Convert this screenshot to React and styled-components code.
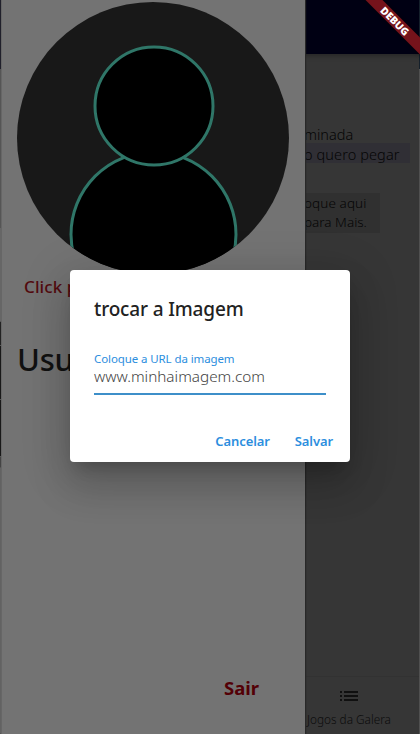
import React from 'react';
import styled, { createGlobalStyle } from 'styled-components';

const GlobalStyle = createGlobalStyle`
  * { box-sizing: border-box; }
  body { margin: 0; overflow: hidden; font-family: 'Noto Sans', 'Open Sans', sans-serif; }
`;

const Screen = styled.div`
  position: relative;
  width: 420px;
  height: 734px;
  overflow: hidden;
  background: #363636;
`;

const Label = styled.span`
  display: block;
  white-space: nowrap;
  font-size: ${(p) => p.$size}px;
  line-height: ${(p) => p.$line || 20}px;
  font-weight: ${(p) => p.$weight || 400};
  letter-spacing: ${(p) => p.$spacing || 0}px;
  color: ${(p) => p.$color};
`;

const Page = styled.div`
  height: 100%;
  display: flex;
  flex-direction: column;
`;

const AppBar = styled.header`
  flex: 0 0 54px;
  background: #000013;
  box-shadow: 0 2px 5px rgba(0, 0, 0, 0.3);
`;

const Content = styled.main`
  flex: 1;
  display: flex;
  flex-direction: column;
  align-items: flex-start;
  padding: 70px 0 0 304px;
`;

const Note = styled.div`
  display: flex;
  flex-direction: column;
  align-items: flex-start;
  width: ${(p) => p.$width}px;
  height: ${(p) => p.$height}px;
  margin-top: ${(p) => p.$gap}px;
  background: ${(p) => p.$fill};
`;

const BottomBar = styled.nav`
  flex: 0 0 58px;
  display: flex;
  flex-direction: column;
  align-items: center;
  padding: 7px 0 0 278px;
  border-top: 1px solid #323232;
`;

const Ribbon = styled.div`
  position: absolute;
  z-index: 5;
  top: 15px;
  right: -27px;
  width: 104px;
  height: 12px;
  display: flex;
  align-items: center;
  justify-content: center;
  transform: rotate(45deg);
  background: #75131b;
  box-shadow: 0 0 4px rgba(0, 0, 0, 0.6);
`;

const Drawer = styled.aside`
  position: absolute;
  top: 0;
  left: 0;
  width: 305px;
  height: 100%;
  display: flex;
  flex-direction: column;
  align-items: flex-start;
  padding: 2px 0 0 17px;
  background: #737373;
  box-shadow: 1px 0 1px #282828;
`;

const Avatar = styled.svg`
  flex: none;
  display: block;
`;

const PhotoHint = styled.div`
  width: 60px;
  overflow: hidden;
  margin: 2px 0 0 7px;
`;

const UserName = styled.div`
  width: 60px;
  overflow: hidden;
  margin-top: 43px;
`;

const SignOut = styled.div`
  margin: auto 0 33px 207px;
`;

const WindowEdge = styled.div`
  position: absolute;
  top: 0;
  ${(p) => p.$side}: 0;
  width: ${(p) => p.$width}px;
  height: 100%;
  display: flex;
  flex-direction: column;
  border-right: ${(p) => (p.$side === 'left' ? '1px solid #666' : 'none')};
`;

const EdgePart = styled.div`
  height: ${(p) => p.$height}px;
  border-bottom: 1px solid #555;
  background: ${(p) => p.$fill};
`;

const Dialog = styled.section`
  position: absolute;
  top: 270px;
  left: 70px;
  width: 280px;
  height: 192px;
  display: flex;
  flex-direction: column;
  padding: 25px 17px 8px 24px;
  border-radius: 4px;
  background: #fff;
  box-shadow: 0 11px 15px -7px rgba(0, 0, 0, 0.2), 0 24px 38px 3px rgba(0, 0, 0, 0.14), 0 9px 46px 8px rgba(0, 0, 0, 0.12);
`;

const Field = styled.div`
  width: 232px;
  margin-top: 27px;
  height: 45px;
  border-bottom: 2px solid #3d8fc9;
`;

const Actions = styled.div`
  display: flex;
  justify-content: flex-end;
  gap: 25px;
  margin-top: 36px;
`;

const edges = [
  [70, '#20202b'],
  [60, '#555'],
  [98, '#555'],
  [94, '#666'],
  [24, '#222'],
  [54, '#181818'],
  [57, '#181818'],
  [11, '#444'],
  [266, '#626262'],
];

const ListIcon = () => (
  <svg width="24" height="24" viewBox="0 0 24 24" fill="#101010">
    <path d="M3 13h2v-2H3v2zm0 4h2v-2H3v2zm0-8h2V7H3v2zm4 4h14v-2H7v2zm0 4h14v-2H7v2zM7 7v2h14V7H7z" />
  </svg>
);

const UserPicture = () => (
  <Avatar width="272" height="272" viewBox="0 0 272 272">
    <defs>
      <clipPath id="avatarClip">
        <circle cx="136" cy="136" r="136" />
      </clipPath>
    </defs>
    <g clipPath="url(#avatarClip)" stroke="#2f7668" strokeWidth="3">
      <circle cx="136" cy="136" r="137" fill="#181818" stroke="none" />
      <circle cx="136.5" cy="232.5" r="82.5" fill="#000" />
      <circle cx="137" cy="104" r="59" fill="#000" />
    </g>
  </Avatar>
);

export default function App() {
  return (
    <>
      <GlobalStyle />
      <Screen>
        <Page>
          <AppBar />
          <Content>
            <Label $size={14.5} $weight={300} $color="#050505">minada</Label>
            <Note $width={106} $height={20} $gap={-1} $fill="#302f35">
              <Label $size={14.5} $weight={300} $spacing={0.1} $line={22} $color="#050505">o quero pegar</Label>
            </Note>
            <Note $width={76} $height={40} $gap={30} $fill="#303030">
              <Label $size={13.5} $weight={300} $spacing={0.1} $line={20} $color="#050505">oque aqui</Label>
              <Label $size={13.5} $weight={300} $line={19} $color="#050505">para Mais.</Label>
            </Note>
          </Content>
          <BottomBar>
            <ListIcon />
            <Label $size={11.8} $weight={300} $line={22} $color="#0c0c0c">Jogos da Galera</Label>
          </BottomBar>
        </Page>
        <Drawer>
          <UserPicture />
          <PhotoHint>
            <Label $size={17} $weight={500} $line={22} $spacing={0.1} $color="#530b0f">Click para</Label>
          </PhotoHint>
          <UserName>
            <Label $size={31} $weight={500} $line={36} $spacing={-0.2} $color="#111">Usuário</Label>
          </UserName>
          <SignOut>
            <Label $size={18.5} $weight={700} $line={26} $color="#530006">Sair</Label>
          </SignOut>
        </Drawer>
        <WindowEdge $side="left" $width={2}>
          {edges.map(([height, fill], i) => (
            <EdgePart key={i} $height={height} $fill={fill} />
          ))}
        </WindowEdge>
        <WindowEdge $side="right" $width={1}>
          <EdgePart $height={70} $fill="#15202b" />
          <EdgePart $height={664} $fill="#505050" />
        </WindowEdge>
        <Ribbon>
          <Label $size={10.3} $line={12} $weight={900} $color="#fff">DEBUG</Label>
        </Ribbon>
        <Dialog>
          <Label $size={19} $weight={500} $line={28} $spacing={-0.15} $color="#222">trocar a Imagem</Label>
          <Field>
            <Label $size={11.5} $line={18} $spacing={-0.1} $color="#2c8ede">Coloque a URL da imagem</Label>
            <Label $size={15.3} $weight={300} $line={17} $color="#444">www.minhaimagem.com</Label>
          </Field>
          <Actions>
            <Label $size={13} $weight={600} $spacing={-0.1} $color="#2c8ede">Cancelar</Label>
            <Label $size={13} $weight={600} $spacing={-0.1} $color="#2c8ede">Salvar</Label>
          </Actions>
        </Dialog>
      </Screen>
    </>
  );
}
